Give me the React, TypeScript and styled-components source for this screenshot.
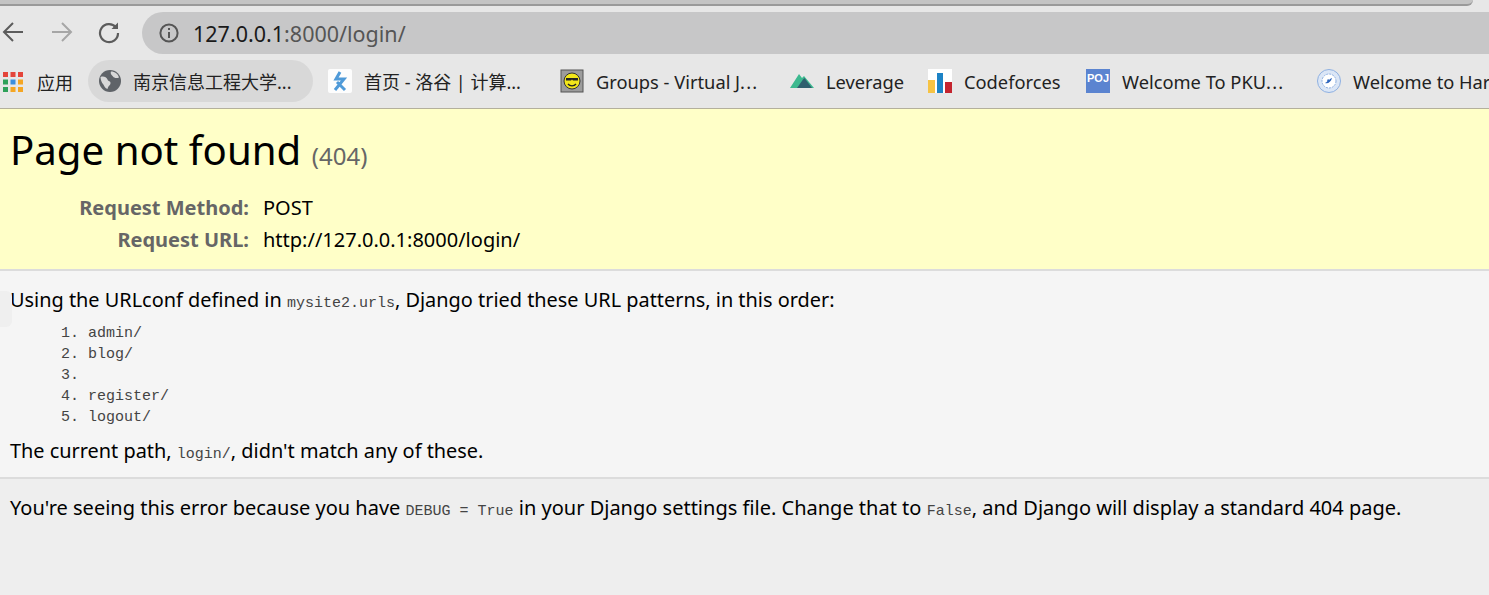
import React from "react";
import styled, { createGlobalStyle } from "styled-components";

const Global = createGlobalStyle`
  html, body { margin: 0; padding: 0; background: #eeeeee; overflow: hidden; }
  body { font-family: "Noto Sans", "Noto Sans CJK SC", sans-serif; color: #000; }
`;
const Page = styled.div`width: 1489px; height: 595px; display: flex; flex-direction: column; overflow: hidden; position: relative;`;
const Chrome = styled.div`background: #e7e7e7; height: 109px; flex: none; border-bottom: 1px solid #b4b09c; box-sizing: border-box; display: flex; flex-direction: column;`;
const FrameEdge = styled.div`height: 6px; flex: none; margin-right: 16px; background: #c4c4c4; border-bottom: 2px solid #9a9a9a; border-bottom-right-radius: 8px; box-sizing: border-box;`;
const NavRow = styled.div`height: 48px; flex: none; display: flex; align-items: flex-start; padding-top: 6px; box-sizing: border-box;`;
const NavButtons = styled.div`width: 142px; flex: none; height: 40px; display: flex; align-items: center; gap: 24.5px; padding-left: 0;`;
const Omnibox = styled.div`flex: 1; height: 42px; background: #c7c7c8; border-radius: 21px 0 0 21px; display: flex; align-items: center; padding-left: 17px; gap: 14px; font-size: 21.5px; color: #555;`;
const Host = styled.span`color: #1a1a1a;`;
const Bookmarks = styled.div`height: 54px; flex: none; display: flex; align-items: center; overflow: hidden; white-space: nowrap; font-size: 18.3px; color: #222;`;
const AppsLauncher = styled.div`width: 88px; flex: none; height: 42px; display: flex; align-items: center; gap: 14px; padding: 2px 0 0 3px; box-sizing: border-box; font-size: 18px;`;
const AppsGrid = styled.span`width: 20px; height: 20px; flex: none; display: block;`;
const Bookmark = styled.div<{ $w: number; $active?: boolean; $cjk?: boolean }>`
  width: ${(p) => p.$w}px; flex: none; height: 42px; display: flex; align-items: center; box-sizing: border-box;
  gap: ${(p) => (p.$active ? 11 : 12)}px;
  padding-left: ${(p) => (p.$active ? 10 : 15)}px;
  border-radius: 21px;
  background: ${(p) => (p.$active ? "#d8d8d8" : "transparent")};
  font-size: ${(p) => (p.$cjk ? 18 : 18.3)}px;
`;
const Dots = styled.span`letter-spacing: 1.2px;`;
const IconBox = styled.span`width: 24px; height: 24px; flex: none; display: block;`;
const Banner = styled.header`height: 162px; flex: none; background: #ffffc8; border-bottom: 2px solid #dcdcdc; box-sizing: border-box; padding: 13px 10px 0;`;
const Title = styled.h1`margin: 0; font-weight: 400; font-size: 40.2px; line-height: 56px;`;
const Code404 = styled.span`font-size: 24px; color: #666;`;
const Meta = styled.div`display: grid; grid-template-columns: 239px auto; justify-content: start; column-gap: 14px; margin-top: 8px; font-size: 20px; line-height: 32px;`;
const MetaKey = styled.div`text-align: right; font-weight: 700; color: #666;`;
const MetaValue = styled.div`color: #000;`;
const Info = styled.section`height: 208px; flex: none; background: #f5f5f5; border-bottom: 2px solid #dcdcdc; box-sizing: border-box; padding: 15px 10px 0; font-size: 19.9px; position: relative;`;
const Para = styled.p`margin: 0; line-height: 28px;`;
const Mono = styled.code`font-family: "Liberation Mono", monospace; font-size: 15px; color: #444;`;
const Patterns = styled.ol`margin: 5px 0 9px; padding: 0 0 0 78px; font-family: "Liberation Mono", monospace; font-size: 15px; line-height: 21px; color: #444;`;
const Smudge = styled.div`position: absolute; left: 0; top: 20px; width: 12px; height: 36px; background: #efefef; border-radius: 0 6px 6px 0;`;
const Explanation = styled.section`flex: 1; background: #eeeeee; padding: 15px 10px 0; font-size: 20px;`;

const Back = ({ c }: { c: string }) => (
  <svg width="24" height="24" viewBox="0 0 24 24" fill="none" stroke={c} strokeWidth="2" style={{ flex: "none" }}>
    <path d="M23 12H4M13 3l-9 9 9 9" />
  </svg>
);
const Forward = () => (
  <svg width="24" height="24" viewBox="0 0 24 24" fill="none" stroke="#a6a6a6" strokeWidth="2" style={{ flex: "none" }}>
    <path d="M3 12h19M13 3l9 9-9 9" />
  </svg>
);
const Reload = () => (
  <svg width="24" height="24" viewBox="0 0 24 24" fill="none" stroke="#5c5c5c" strokeWidth="2.2" style={{ flex: "none" }}>
    <path d="M19 7.500A9 9 0 1 0 21 13" />
    <path d="M21 2.500V9h-6.500z" fill="#5c5c5c" stroke="none" />
  </svg>
);
const InfoIcon = () => (
  <svg width="20" height="20" viewBox="0 0 20 20" fill="none" stroke="#555" strokeWidth="2" style={{ flex: "none" }}>
    <circle cx="10" cy="10" r="8.600" />
    <path d="M10 9v6" />
    <path d="M10 5v2" />
  </svg>
);
const Apps = () => (
  <svg width="20" height="20" viewBox="0 0 20 20">
    {[["#e4453a", "#e4453a", "#e4453a"], ["#2ea15a", "#3b8fe0", "#f5a623"], ["#2ea15a", "#f5a623", "#f5a623"]].flatMap((row, y) =>
      row.map((fill, x) => <rect key={`${x}${y}`} x={x * 7.500} y={y * 7.500} width="5" height="5" fill={fill} />)
    )}
  </svg>
);
const Globe = () => (
  <svg width="24" height="24" viewBox="0 0 24 24">
    <circle cx="12" cy="12" r="11" fill="#5f6368" />
    <path d="M2.500 8c3-1 6 0 7 2.500s3 1 3 3.500-2 2-3 6c-3-1-3.500-4-4.500-5s-2.500-4-2.500-7zM13 2.500c4 0 7 2.500 8 6-2.500 1-5 .5-6-1s-3-2.500-2-5z" fill="#d8d8d8" />
  </svg>
);
const Luogu = () => (
  <svg width="24" height="24" viewBox="0 0 24 24">
    <rect width="24" height="24" rx="2" fill="#fdfdfd" />
    <path d="M12 3L8 10h8L7 21M9 13l8 8" fill="none" stroke="#4f9ad8" strokeWidth="3" />
  </svg>
);
const Smiley = () => (
  <svg width="24" height="24" viewBox="0 0 24 24">
    <rect x="1" y="1" width="22" height="22" fill="#9c9c9c" stroke="#555" />
    <circle cx="12" cy="12" r="8" fill="#f2e61a" stroke="#333" />
    <path d="M6 9h12v2.500h-5l-1-1-1 1H6z" fill="#222" />
    <path d="M8 15c2 2.500 6 2.500 8 0" fill="none" stroke="#222" strokeWidth="1.400" />
  </svg>
);
const Leverage = () => (
  <svg width="24" height="24" viewBox="0 0 24 24">
    <path d="M0 19L9 5l3 4 2-2 10 12z" fill="#3cb98f" />
    <path d="M7 19l6-8.500 1.500-1.500L22 19z" fill="#2f5f6e" />
  </svg>
);
const Bars = () => (
  <svg width="24" height="24" viewBox="0 0 24 24">
    <rect width="24" height="24" fill="#fff" />
    <rect x="0" y="11" width="7" height="13" fill="#f6c344" />
    <rect x="9" y="4" width="6" height="20" fill="#1c83c6" />
    <rect x="17" y="13" width="7" height="11" fill="#c4242f" />
  </svg>
);
const Poj = () => (
  <svg width="24" height="24" viewBox="0 0 24 24">
    <rect width="24" height="24" fill="#5b84d0" />
    <text x="12" y="13" textAnchor="middle" fontSize="11" fontWeight="700" fontFamily="Liberation Sans" fill="#fff">POJ</text>
  </svg>
);
const Seal = () => (
  <svg width="24" height="24" viewBox="0 0 24 24">
    <circle cx="12" cy="12" r="11.500" fill="#dbe6f6" stroke="#8fb0e0" />
    <circle cx="12" cy="12" r="7" fill="#fff" stroke="#8fb0e0" strokeDasharray="2 1" />
    <path d="M8 14c3 1 6-1 7-5-1 0-2 1-3 2 0-1-1-1-2 0 1 1 0 2-2 3z" fill="#2f66bd" />
  </svg>
);

const items: { w: number; icon: React.ReactNode; label: string; dots?: boolean; active?: boolean; cjk?: boolean }[] = [
  { w: 225, icon: <Globe />, label: "南京信息工程大学...", active: true, cjk: true },
  { w: 232, icon: <Luogu />, label: "首页 - 洛谷 | 计算...", cjk: true },
  { w: 230, icon: <Smiley />, label: "Groups - Virtual J", dots: true },
  { w: 138, icon: <Leverage />, label: "Leverage" },
  { w: 158, icon: <Bars />, label: "Codeforces" },
  { w: 231, icon: <Poj />, label: "Welcome To PKU", dots: true },
  { w: 200, icon: <Seal />, label: "Welcome to Harbin" },
];

export default function App() {
  return (
    <Page>
      <Global />
      <Chrome>
        <FrameEdge />
        <NavRow>
          <NavButtons>
            <Back c="#5c5c5c" />
            <Forward />
            <Reload />
          </NavButtons>
          <Omnibox>
            <InfoIcon />
            <div><Host>127.0.0.1</Host>:8000/login/</div>
          </Omnibox>
        </NavRow>
        <Bookmarks>
          <AppsLauncher><AppsGrid><Apps /></AppsGrid>应用</AppsLauncher>
          {items.map((it) => (
            <Bookmark key={it.label} $w={it.w} $active={it.active} $cjk={it.cjk}>
              <IconBox>{it.icon}</IconBox>
              <span>{it.label}{it.dots && <Dots>...</Dots>}</span>
            </Bookmark>
          ))}
        </Bookmarks>
      </Chrome>
      <Banner>
        <Title>Page not found <Code404>(404)</Code404></Title>
        <Meta>
          <MetaKey>Request Method:</MetaKey><MetaValue>POST</MetaValue>
          <MetaKey>Request URL:</MetaKey><MetaValue>http://127.0.0.1:8000/login/</MetaValue>
        </Meta>
      </Banner>
      <Info>
        <Smudge />
        <Para>Using the URLconf defined in <Mono>mysite2.urls</Mono>, Django tried these URL patterns, in this order:</Para>
        <Patterns>
          <li>admin/</li>
          <li>blog/</li>
          <li>&nbsp;</li>
          <li>register/</li>
          <li>logout/</li>
        </Patterns>
        <Para>The current path, <Mono>login/</Mono>, didn't match any of these.</Para>
      </Info>
      <Explanation>
        <Para>You're seeing this error because you have <Mono>DEBUG = True</Mono> in your Django settings file. Change that to <Mono>False</Mono>, and Django will display a standard 404 page.</Para>
      </Explanation>
    </Page>
  );
}
